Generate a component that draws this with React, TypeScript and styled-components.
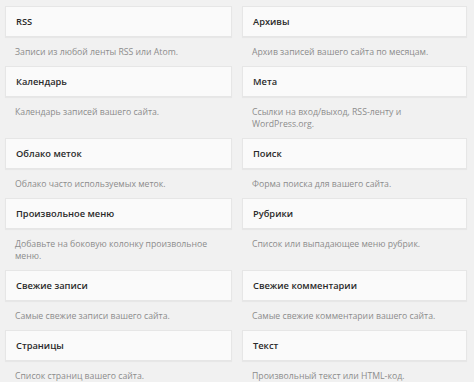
import React from "react";
import styled, { createGlobalStyle } from "styled-components";

const Global = createGlobalStyle`
  html, body { margin: 0; padding: 0; background: #f1f1f1; }
  body { font-family: "Open Sans", "Noto Sans", sans-serif; }
`;

const Grid = styled.div`
  display: grid;
  grid-template-columns: 227px 225px;
  column-gap: 10px;
  padding: 6px 7px 0 5px;
  width: 474px;
  height: 382px;
  box-sizing: border-box;
  overflow: hidden;
`;

const Widget = styled.div`
  display: flex;
  flex-direction: column;
`;

const Top = styled.div`
  height: 31px;
  box-sizing: border-box;
  background: #fafafa;
  border: 1px solid #e6e6e6;
  box-shadow: 0 1px 1px rgba(0, 0, 0, 0.04);
  display: flex;
  align-items: center;
  padding: 0 10px;
`;

const Title = styled.h3`
  margin: 0;
  font-size: 9.3px;
  font-weight: 600;
  color: #2a2a2a;
  line-height: 1;
`;

const Desc = styled.p`
  margin: 0;
  padding: 9px 10px 8px 10px;
  font-size: 8.7px;
  line-height: 12px;
  color: #8c8c8c;
`;

const widgets: [string, string][] = [
  ["RSS", "Записи из любой ленты RSS или Atom."],
  ["Архивы", "Архив записей вашего сайта по месяцам."],
  ["Календарь", "Календарь записей вашего сайта."],
  ["Мета", "Ссылки на вход/выход, RSS-ленту и WordPress.org."],
  ["Облако меток", "Облако часто используемых меток."],
  ["Поиск", "Форма поиска для вашего сайта."],
  ["Произвольное меню", "Добавьте на боковую колонку произвольное меню."],
  ["Рубрики", "Список или выпадающее меню рубрик."],
  ["Свежие записи", "Самые свежие записи вашего сайта."],
  ["Свежие комментарии", "Самые свежие комментарии вашего сайта."],
  ["Страницы", "Список страниц вашего сайта."],
  ["Текст", "Произвольный текст или HTML-код."],
];

export default function App() {
  return (
    <>
      <Global />
      <Grid>
        {widgets.map(([t, d]) => (
          <Widget key={t}>
            <Top>
              <Title>{t}</Title>
            </Top>
            <Desc>{d}</Desc>
          </Widget>
        ))}
      </Grid>
    </>
  );
}
